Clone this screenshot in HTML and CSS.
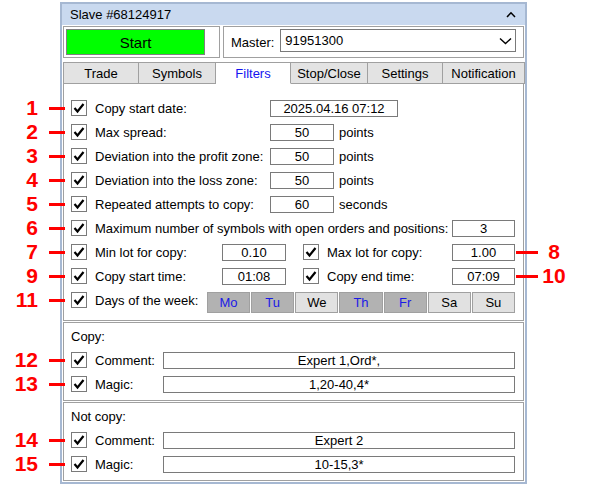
FILE: index.html
```html
<!DOCTYPE html>
<html>
<head>
<meta charset="utf-8">
<link rel="stylesheet" href="styles.css">
</head>
<body>
<div class="panel">
  <div class="titlebar">
    <span>Slave #68124917</span>
    <svg class="chev" width="10" height="7" viewBox="0 0 10 7"><polyline points="1,6 5,1.8 9,6" fill="none" stroke="#000" stroke-width="1.5"/></svg>
  </div>
  <div class="toprow">
    <div class="startbox"><div class="start">Start</div></div>
    <div class="masterbox">
      <span>Master:</span>
      <div class="select"><span>91951300</span>
        <svg width="13" height="8" viewBox="0 0 13 8"><polyline points="1,1.5 6.5,6.5 12,1.5" fill="none" stroke="#000" stroke-width="1.4"/></svg>
      </div>
    </div>
  </div>
  <div class="tabs">
    <div class="tab w76">Trade</div>
    <div class="tab w77">Symbols</div>
    <div class="tab w75 active">Filters</div>
    <div class="tab w77">Stop/Close</div>
    <div class="tab w75">Settings</div>
    <div class="tab last">Notification</div>
  </div>
  <div class="page">
    <div class="row">
      <span class="num l">1</span><span class="lead l"></span>
      <span class="cb"><svg viewBox="0 0 14 14"><polyline points="2.5,7 5.5,10.5 11.5,3" fill="none" stroke="#000" stroke-width="2.2"/></svg></span>
      <span class="lbl w175">Copy start date:</span>
      <span class="inp w128">2025.04.16 07:12</span>
    </div>
    <div class="row">
      <span class="num l">2</span><span class="lead l"></span>
      <span class="cb"><svg viewBox="0 0 14 14"><polyline points="2.5,7 5.5,10.5 11.5,3" fill="none" stroke="#000" stroke-width="2.2"/></svg></span>
      <span class="lbl w175">Max spread:</span>
      <span class="inp w64">50</span><span class="unit">points</span>
    </div>
    <div class="row">
      <span class="num l">3</span><span class="lead l"></span>
      <span class="cb"><svg viewBox="0 0 14 14"><polyline points="2.5,7 5.5,10.5 11.5,3" fill="none" stroke="#000" stroke-width="2.2"/></svg></span>
      <span class="lbl w175">Deviation into the profit zone:</span>
      <span class="inp w64">50</span><span class="unit">points</span>
    </div>
    <div class="row">
      <span class="num l">4</span><span class="lead l"></span>
      <span class="cb"><svg viewBox="0 0 14 14"><polyline points="2.5,7 5.5,10.5 11.5,3" fill="none" stroke="#000" stroke-width="2.2"/></svg></span>
      <span class="lbl w175">Deviation into the loss zone:</span>
      <span class="inp w64">50</span><span class="unit">points</span>
    </div>
    <div class="row">
      <span class="num l">5</span><span class="lead l"></span>
      <span class="cb"><svg viewBox="0 0 14 14"><polyline points="2.5,7 5.5,10.5 11.5,3" fill="none" stroke="#000" stroke-width="2.2"/></svg></span>
      <span class="lbl w175">Repeated attempts to copy:</span>
      <span class="inp w64">60</span><span class="unit">seconds</span>
    </div>
    <div class="row">
      <span class="num l">6</span><span class="lead l"></span>
      <span class="cb"><svg viewBox="0 0 14 14"><polyline points="2.5,7 5.5,10.5 11.5,3" fill="none" stroke="#000" stroke-width="2.2"/></svg></span>
      <span class="lbl">Maximum number of symbols with open orders and positions:</span>
      <span class="inp w63 right">3</span>
    </div>
    <div class="row">
      <span class="num l">7</span><span class="lead l"></span>
      <span class="cb"><svg viewBox="0 0 14 14"><polyline points="2.5,7 5.5,10.5 11.5,3" fill="none" stroke="#000" stroke-width="2.2"/></svg></span>
      <span class="lbl w127">Min lot for copy:</span>
      <span class="inp w64">0.10</span>
      <span class="cb second"><svg viewBox="0 0 14 14"><polyline points="2.5,7 5.5,10.5 11.5,3" fill="none" stroke="#000" stroke-width="2.2"/></svg></span>
      <span class="lbl">Max lot for copy:</span>
      <span class="inp w63 right">1.00</span>
      <span class="lead r"></span><span class="num r">8</span>
    </div>
    <div class="row">
      <span class="num l">9</span><span class="lead l"></span>
      <span class="cb"><svg viewBox="0 0 14 14"><polyline points="2.5,7 5.5,10.5 11.5,3" fill="none" stroke="#000" stroke-width="2.2"/></svg></span>
      <span class="lbl w127">Copy start time:</span>
      <span class="inp w64">01:08</span>
      <span class="cb second"><svg viewBox="0 0 14 14"><polyline points="2.5,7 5.5,10.5 11.5,3" fill="none" stroke="#000" stroke-width="2.2"/></svg></span>
      <span class="lbl">Copy end time:</span>
      <span class="inp w63 right">07:09</span>
      <span class="lead r"></span><span class="num r">10</span>
    </div>
    <div class="row">
      <span class="num l">11</span><span class="lead l"></span>
      <span class="cb"><svg viewBox="0 0 14 14"><polyline points="2.5,7 5.5,10.5 11.5,3" fill="none" stroke="#000" stroke-width="2.2"/></svg></span>
      <span class="lbl w112">Days of the week:</span>
      <div class="days">
        <span class="day on">Mo</span>
        <span class="day on">Tu</span>
        <span class="day">We</span>
        <span class="day on">Th</span>
        <span class="day on">Fr</span>
        <span class="day">Sa</span>
        <span class="day">Su</span>
      </div>
    </div>
  </div>
  <div class="section">
    <div class="caption">Copy:</div>
    <div class="row">
      <span class="num l">12</span><span class="lead l"></span>
      <span class="cb"><svg viewBox="0 0 14 14"><polyline points="2.5,7 5.5,10.5 11.5,3" fill="none" stroke="#000" stroke-width="2.2"/></svg></span>
      <span class="lbl w68">Comment:</span>
      <span class="inp wide">Expert 1,Ord*,</span>
    </div>
    <div class="row">
      <span class="num l">13</span><span class="lead l"></span>
      <span class="cb"><svg viewBox="0 0 14 14"><polyline points="2.5,7 5.5,10.5 11.5,3" fill="none" stroke="#000" stroke-width="2.2"/></svg></span>
      <span class="lbl w68">Magic:</span>
      <span class="inp wide">1,20-40,4*</span>
    </div>
  </div>
  <div class="section">
    <div class="caption">Not copy:</div>
    <div class="row">
      <span class="num l">14</span><span class="lead l"></span>
      <span class="cb"><svg viewBox="0 0 14 14"><polyline points="2.5,7 5.5,10.5 11.5,3" fill="none" stroke="#000" stroke-width="2.2"/></svg></span>
      <span class="lbl w68">Comment:</span>
      <span class="inp wide">Expert 2</span>
    </div>
    <div class="row">
      <span class="num l">15</span><span class="lead l"></span>
      <span class="cb"><svg viewBox="0 0 14 14"><polyline points="2.5,7 5.5,10.5 11.5,3" fill="none" stroke="#000" stroke-width="2.2"/></svg></span>
      <span class="lbl w68">Magic:</span>
      <span class="inp wide">10-15,3*</span>
    </div>
  </div>
</div>
</body>
</html>
```
FILE: styles.css
```css
* { box-sizing: border-box; }
body {
  margin: 0;
  background: #fff;
  color: #000;
  font-family: "Liberation Sans", Arial, sans-serif;
  font-size: 13px;
}
.panel {
  width: 467px;
  margin: 2px 0 0 60px;
  border: 2px solid #a6b8d2;
  padding-bottom: 1px;
}
.titlebar {
  height: 21px;
  background: #c9d9ef;
  display: flex;
  align-items: center;
  justify-content: space-between;
  padding: 0 9px 0 8px;
}
.chev { display: block; }
.toprow {
  display: flex;
  gap: 3px;
  height: 32px;
  margin: 1px 1px 0 1px;
}
.startbox {
  width: 157px;
  border: 1px solid #a0a0a0;
  padding: 2px 2px 3px 2px;
}
.start {
  width: 139px;
  height: 26px;
  background: #00ff00;
  border: 1px solid #808080;
  display: flex;
  align-items: center;
  justify-content: center;
  font-size: 15px;
}
.masterbox {
  flex: 1;
  border: 1px solid #a0a0a0;
  display: flex;
  align-items: center;
  padding: 0 7px 0 7px;
}
.select {
  flex: 1;
  align-self: flex-start;
  margin: 2px 0 0 6px;
  height: 23px;
  border: 1px solid #7a7a7a;
  display: flex;
  align-items: center;
  justify-content: space-between;
  padding: 0 3px 0 4px;
}
.select svg { display: block; margin-top: 1px; }
.tabs {
  display: flex;
  height: 22px;
  margin: 4px 0 0 1px;
}
.tab {
  height: 22px;
  background: #e3e3e3;
  border: 1px solid #a0a0a0;
  border-left: none;
  display: flex;
  align-items: center;
  justify-content: center;
}
.tab:first-child { border-left: 1px solid #a0a0a0; }
.tab.active {
  background: #fff;
  border-bottom-color: #fff;
  color: #1414f0;
}
.w76 { width: 76px; }
.w77 { width: 77px; }
.w75 { width: 75px; }
.tab.last { flex: 1; }
.page {
  margin: 0 1px;
  border: 1px solid #a0a0a0;
  border-top: none;
  padding: 12px 0 8px;
}
.section {
  margin: 1px 1px 0;
  border: 1px solid #a0a0a0;
  padding: 6px 0 4px;
}
.caption {
  height: 19px;
  line-height: 15px;
  padding-left: 7px;
}
.row {
  position: relative;
  display: flex;
  align-items: center;
  height: 24px;
  padding: 0 8px 0 7px;
}
.cb {
  width: 16px;
  height: 16px;
  border: 1px solid #7a7a7a;
  background: #fff;
  flex: none;
  margin-right: 8px;
}
.cb svg { display: block; width: 14px; height: 14px; }
.cb.second { margin-left: 17px; }
.lbl { white-space: nowrap; flex: none; }
.w175 { width: 175px; }
.w127 { width: 127px; }
.w112 { width: 112px; }
.w68 { width: 68px; }
.inp {
  height: 17px;
  border: 1px solid #7a7a7a;
  background: #fff;
  text-align: center;
  line-height: 15px;
  flex: none;
}
.w128 { width: 128px; }
.w64 { width: 64px; }
.w63 { width: 63px; }
.inp.right { margin-left: auto; }
.inp.wide { flex: 1; }
.unit { margin-left: 5px; }
.days {
  display: grid;
  grid-template-columns: repeat(7, 1fr);
  gap: 1px;
  width: 309px;
  margin-top: 4px;
}
.day {
  height: 21px;
  background: #e1e1e1;
  border: 1px solid #a0a0a0;
  display: flex;
  align-items: center;
  justify-content: center;
}
.day.on { background: #b2b2b2; color: #1a1ae6; }
.num {
  position: absolute;
  top: 50%;
  transform: translateY(-50%);
  color: #ff0000;
  font-weight: bold;
  font-size: 21px;
  line-height: 22px;
}
.num.l { left: -51px; width: 25px; text-align: right; }
.num.r { left: 476px; width: 28px; text-align: center; }
.lead {
  position: absolute;
  top: 50%;
  height: 3px;
  margin-top: -1px;
  background: #ff0000;
}
.lead.l { left: -15px; width: 16px; }
.lead.r { left: 452px; width: 22px; }
```
